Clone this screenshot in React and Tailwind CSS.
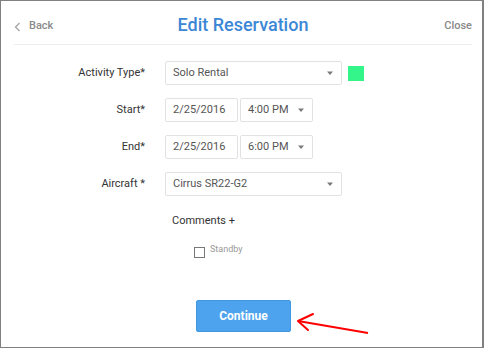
import React from "react";

const Caret = () => (
  <svg width="8" height="6" viewBox="0 0 8 6" className="shrink-0">
    <path d="M1 1.5h6L4 5z" fill="#7a7a7a" />
  </svg>
);

const Field = ({ children, className = "" }) => (
  <div
    className={`h-[24px] flex items-center px-[7px] border border-[#e2e2e2] rounded-[2px] bg-white text-[11px] text-[#555] ${className}`}
  >
    {children}
  </div>
);

const Row = ({ label, children }) => (
  <div className="flex items-center h-[24px]">
    <div className="w-[144px] text-right text-[11px] text-[#333]">{label}</div>
    <div className="ml-[20px] flex items-center gap-[2px]">{children}</div>
  </div>
);

export default function App() {
  return (
    <div
      className="relative w-[484px] h-[348px] bg-white border border-[#808080] border-r-2 overflow-hidden"
      style={{ fontFamily: "Roboto, 'Liberation Sans', sans-serif" }}
    >
      {/* header */}
      <div className="ml-[13px] mr-[10px] h-[44px] pt-[4px] grid grid-cols-[1fr_auto_1fr] items-center border-b border-[#eeeeee]">
        <button className="mt-[4px] flex items-center gap-[8px] text-[11px] font-medium text-[#8a8a8a] justify-self-start">
          <svg width="7" height="10" viewBox="0 0 7 10">
            <path d="M5.5 1L1.5 5l4 4" fill="none" stroke="#a0a0a0" strokeWidth="1.2" />
          </svg>
          Back
        </button>
        <h1 className="text-[18px] font-medium text-[#3b87d6] leading-none">Edit Reservation</h1>
        <button className="mt-[4px] text-[11px] font-medium text-[#8a8a8a] justify-self-end">Close</button>
      </div>

      {/* form */}
      <div className="mt-[16px] flex flex-col gap-[13px]">
        <Row label="Activity Type*">
          <Field className="w-[177px] justify-between">
            <span>Solo Rental</span>
            <Caret />
          </Field>
          <div className="ml-[4px] w-[16px] h-[15px] bg-[#33f58a]" />
        </Row>
        <Row label="Start*">
          <Field className="w-[73px]">2/25/2016</Field>
          <Field className="w-[73px] justify-between">
            <span>4:00 PM</span>
            <Caret />
          </Field>
        </Row>
        <Row label="End*">
          <Field className="w-[73px]">2/25/2016</Field>
          <Field className="w-[73px] justify-between">
            <span>6:00 PM</span>
            <Caret />
          </Field>
        </Row>
        <Row label="Aircraft *">
          <Field className="w-[177px] justify-between">
            <span>Cirrus SR22-G2</span>
            <Caret />
          </Field>
        </Row>
      </div>

      <div className="ml-[171px] mt-[17px] text-[11px] text-[#333]">Comments +</div>

      <label className="ml-[193px] mt-[17px] flex items-center gap-[5px] text-[9px] text-[#999]">
        <span className="w-[11px] h-[11px] border border-[#777] bg-white" />
        <span className="-mt-[4px]">Standby</span>
      </label>

      <div className="mt-[42px] ml-[195px]">
        <button className="w-[95px] h-[32px] rounded-[2px] bg-[#4ea3ee] border border-[#3f97e4] text-white text-[12px] font-bold">
          Continue
        </button>
      </div>

      {/* annotation arrow */}
      <svg className="absolute left-0 top-0 pointer-events-none" width="484" height="348">
        <path d="M367 332L297 320" stroke="#ff0000" strokeWidth="2" fill="none" />
        <path d="M312 313L297 320L307 329" stroke="#ff0000" strokeWidth="2" fill="none" strokeLinecap="round" strokeLinejoin="round" />
      </svg>
    </div>
  );
}
